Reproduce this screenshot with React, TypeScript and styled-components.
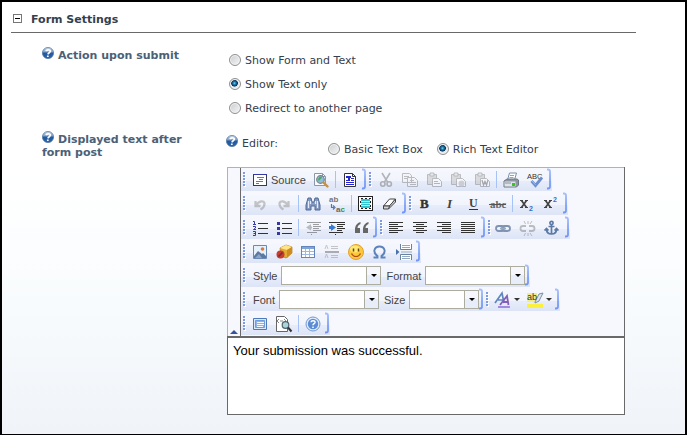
import React, { useState } from "react";
import type { ReactNode } from "react";
import styled, { createGlobalStyle, css } from "styled-components";

const ink = "#34404d";
const slate = "#4b6177";

const GlobalStyle = createGlobalStyle`
  *, *::before, *::after { box-sizing: border-box; }
  body { margin: 0; background: #fff; }
  button, select, textarea, input { font: inherit; margin: 0; }
`;

const Page = styled.main`
  min-height: 100vh;
  padding: 11px 49px 19px 9px;
  border: 2px solid #000;
  background: linear-gradient(#fff 0, #fff 40%, #fbfdfe 60%, #f5f9fc 80%, #f0f4f9 100%);
  color: ${ink};
  font: 11px/14px Verdana, "DejaVu Sans", sans-serif;
`;

const SectionHeader = styled.header`
  display: flex;
  align-items: flex-start;
  gap: 9px;
  padding: 0 0 5px 2px;
  border-bottom: 1px solid #696969;
`;

const Toggle = styled.button`
  display: flex;
  width: 9px;
  height: 9px;
  margin-top: 1px;
  padding: 0;
  border: 0;
  background: none;
`;

const Title = styled.h2`
  margin: 0;
  font-size: 11px;
  line-height: 14px;
`;

const Fields = styled.div`
  display: grid;
  grid-template-columns: 184px minmax(0, 1fr);
  padding: 14px 11px 0 31px;
`;

const FieldLabel = styled.div`
  padding-right: 24px;
  color: ${slate};
  font-weight: bold;
  line-height: 13px;
`;

const HelpIcon = styled.svg`
  width: 12px;
  height: 12px;
  margin-right: 4px;
`;

const RadioList = styled.div`
  display: flex;
  flex-direction: column;
  padding: 2px 0 10px 3px;
`;

const RadioLabel = styled.label`
  display: flex;
  align-items: center;
  gap: 4px;
  height: 24px;
  white-space: nowrap;
`;

const Radio = styled.input`
  appearance: none;
  flex: none;
  width: 12px;
  height: 12px;
  border: 1px solid #8e8f8f;
  border-radius: 50%;
  background: linear-gradient(135deg, #c9cccf, #f6f6f6);
  box-shadow: inset 0 0 0 1px #f4f4f4;
  &:checked {
    background: radial-gradient(circle at 45% 42%, #7fd6f5 0, #1e82b8 16%, #0c2f55 38%, #e4e9ed 46%);
  }
  && { margin-bottom: 2px; }
`;

const EditorField = styled.div`
  padding-top: 4px;
`;

const EditorChoice = styled.div`
  display: grid;
  grid-template-columns: 102px 1fr;
  height: 32px;
`;

const EditorModes = styled.div`
  display: flex;
  gap: 14px;
  padding-top: 3px;
`;

const Editor = styled.div`
  margin-left: 1px;
  border: 1px solid #696969;
  background: #fff;
`;

const ToolPanel = styled.div`
  display: flex;
  margin: -1px 0 0 -1px;
  border: 1px solid #b1b1b8;
  border-width: 1px 0 0 1px;
  background: #f7f8fd;
`;

const Collapser = styled.button`
  display: flex;
  align-items: flex-end;
  justify-content: center;
  flex: none;
  width: 13px;
  padding: 0 0 2px;
  border: 0;
  border-right: 1px solid #696969;
  background: #f7f8fd;
`;

const ToolRows = styled.div`
  flex: 1;
  min-width: 0;
`;

const ToolRow = styled.div`
  display: flex;
  height: 23px;
  margin-bottom: 1px;
`;

const Group = styled.div`
  display: flex;
  align-items: center;
  background: linear-gradient(#f7f8fe 0, #f1f4fc 55%, #e8edfa 55%, #dde4f6 100%);
`;

const Grip = styled.svg`
  width: 7px;
  height: 23px;
`;

const Bracket = styled.svg`
  width: 5px;
  height: 23px;
`;

const Divider = styled.span`
  width: 1px;
  height: 17px;
  margin: 0 2px;
  background: #a5c3f5;
`;

const ToolButton = styled.button<{ $muted?: boolean; $wide?: boolean }>`
  display: flex;
  align-items: center;
  justify-content: center;
  gap: 3px;
  width: ${(p) => (p.$wide ? "auto" : "24px")};
  height: 23px;
  padding: 0 ${(p) => (p.$wide ? 3 : 0)}px 0 ${(p) => (p.$wide ? 4 : 0)}px;
  border: 0;
  background: none;
  color: #444;
  font: 11px/14px "Liberation Sans", Arial, sans-serif;
  ${(p) => p.$muted && css`opacity: 0.45; filter: grayscale(1);`}
`;

const Glyph = styled.svg`
  flex: none;
  width: 16px;
  height: 16px;
  overflow: visible;
`;

const ComboLabel = styled.label`
  display: flex;
  align-items: center;
  gap: 4px;
  padding-left: 5px;
  color: #444;
  font: 11px/14px "Liberation Sans", Arial, sans-serif;
`;

const ComboBox = styled.span<{ $size: number }>`
  display: grid;
  width: ${(p) => p.$size}px;
  height: 19px;
  border: 1px solid #adad9f;
  background: #fff;
`;

const ComboSelect = styled.select`
  grid-area: 1 / 1;
  appearance: none;
  min-width: 0;
  padding: 0 16px 0 3px;
  border: 0;
  background: none;
`;

const ComboArrow = styled.span`
  grid-area: 1 / 1;
  justify-self: end;
  display: flex;
  align-items: center;
  justify-content: center;
  width: 14px;
  border-left: 1px solid #adad9f;
  background: linear-gradient(#f5f7fd 50%, #e8edfa 50%);
  pointer-events: none;
`;

const Content = styled.textarea`
  display: block;
  width: 100%;
  height: 78px;
  padding: 6px 5px;
  border: 0;
  border-top: 2px solid #696969;
  outline: 0;
  resize: none;
  background: #fff;
  color: #000;
  font: 13px/14px "Liberation Sans", Arial, sans-serif;
`;

function Help() {
  return (
    <HelpIcon viewBox="0 0 12 12" aria-hidden="true">
      <defs>
        <linearGradient id="helpBall" x1="0" y1="0" x2="0" y2="1">
          <stop offset="0" stopColor="#c9d5e3" />
          <stop offset="0.4" stopColor="#86a3c6" />
          <stop offset="0.5" stopColor="#2158a0" />
          <stop offset="1" stopColor="#2b64ab" />
        </linearGradient>
      </defs>
      <circle cx="6" cy="6" r="5.6" fill="url(#helpBall)" stroke="#4b719f" strokeWidth=".7" />
      <path d="M4 4.2C4.3 2.4 8.4 2.2 8.3 4.3C8.2 5.8 6.2 5.6 6 7.3M5.8 8.6v1.5" fill="none" stroke="#fff" strokeWidth="1.7" />
    </HelpIcon>
  );
}

const textLines = (d: string, color = "#333") => <path d={d} stroke={color} shapeRendering="crispEdges" />;

const clipboard = (
  <>
    <path d="M1.5 2.5h9v10h-9z" fill="#bbb" stroke="#777" />
    <path d="M4 1h4v3H4z" fill="#ddd" stroke="#777" />
    <path d="M6.5 6.5h6l3 3v5h-9z" fill="#fff" stroke="#777" />
  </>
);

const glyphs: Record<string, ReactNode> = {
  source: (
    <g shapeRendering="crispEdges">
      <path d="M1.5 2.5h13v11h-13z" fill="#fff" stroke="#3b3b46" />
      <path d="M1 2.5h14" stroke="#3538a5" />
      <path d="M5 5.5h7M7 7.5h4M4 9.5h7M4 11.5h3" stroke="#777" />
    </g>
  ),
  preview: (
    <>
      <path d="M1.5 1.5h8l3 3v9h-11z" fill="#f8fafd" stroke="#8b98ad" />
      <path d="M9.5 1.5v3h3" fill="none" stroke="#8b98ad" />
      <circle cx="7.5" cy="7.5" r="3.8" fill="#8dbedf" stroke="#77818c" strokeWidth="1.2" />
      <path d="M5 7c1-2 2-3 4-2 0 2-3 2-3 5z" fill="#51a667" />
      <path d="m10.5 10.5 4 4" stroke="#c39246" strokeWidth="2.4" strokeLinecap="round" />
    </>
  ),
  templates: (
    <>
      <path d="M2.5 1.5h8l3 3v10h-11z" fill="#fff" stroke="#333" />
      <path d="M10.5 1.5v3h3" fill="none" stroke="#333" />
      <path d="M4 4.5h5M6.5 4v4" stroke="#2525cf" strokeWidth="2" shapeRendering="crispEdges" />
      <path d="M4 10.5h8M4 12.5h8M9 6.5h3M9 8.5h3M4 8.5h4" stroke="#2525cf" shapeRendering="crispEdges" />
    </>
  ),
  cut: (
    <g fill="none" stroke="#666" strokeWidth="1.6">
      <path d="M4 1l5.5 9M12 1 6.5 10" />
      <circle cx="4.8" cy="12" r="2.2" />
      <circle cx="11.2" cy="12" r="2.2" />
    </g>
  ),
  copy: (
    <g fill="#f4f4f4" stroke="#777">
      <path d="M.5 1.5h7l2 2v7h-9zM5.5 5.5h7l3 3v6h-10z" />
      <path d="M2 4.5h5M2 6.5h3M8 8.5h4M8 10.5h6M8 12.5h6" />
    </g>
  ),
  paste: <>{clipboard}<path d="M8 9.5h4M8 11.5h6" stroke="#777" /></>,
  pasteText: <>{clipboard}<circle cx="11.5" cy="11.5" r="3" fill="#aaa" /></>,
  pasteWord: <>{clipboard}<path d="m8 8 1.5 5L11 9.5l1.5 3.5L14 8" fill="none" stroke="#555" strokeWidth="1.3" /></>,
  print: (
    <>
      <path d="m4.5 8 2-7h7l-2 7z" fill="#fff" stroke="#7690b0" />
      <path d="M7 3.5h4M6.5 5.5h4" stroke="#8ab" />
      <path d="m1 9 3-2h10l1.5 1v5l-2 2H1z" fill="#8d96a2" stroke="#6d7885" />
      <path d="M1.500 9.500h11v5h-11z" fill="#dfe4ea" />
      <path d="M2 11h6" stroke="#8a929c" />
      <rect x="9" y="11" width="3" height="3" fill="#39c328" />
    </>
  ),
  spell: (
    <>
      <text x="0" y="6.5" fontSize="7.5" fontFamily="Liberation Sans" fill="#333">ABC</text>
      <path d="m4.5 9 4 4.5L15 5.5" fill="none" stroke="#6c8fd0" strokeWidth="2.8" />
      <path d="m5 9 3.5 3.8" stroke="#9cbbec" strokeWidth="1" />
    </>
  ),
  undo: <path d="M3.500 5v5h5M4.500 9c2-4 8-5 8-1.500 0 3-1 4.500-4 6" fill="none" stroke="#888" strokeWidth="2.300" />,
  redo: <path d="M12.500 5v5h-5M11.500 9c-2-4-8-5-8-1.500 0 3 1 4.500 4 6" fill="none" stroke="#888" strokeWidth="2.300" />,
  find: (
    <>
      <path d="M3 2h3l1 4h2l1-4h3l2 7v5h-5v-4H6v4H1V9z" fill="#8399c0" stroke="#4f6b98" />
      <path d="M3.5 5v7M12.5 5v7M5.5 5v3M10.5 5v3" stroke="#e4edfb" strokeWidth="1.2" />
    </>
  ),
  replace: (
    <>
      <text x="0" y="6" fontSize="8" fontWeight="bold" fontFamily="Liberation Sans" fill="#777">ab</text>
      <text x="7" y="16" fontSize="8" fontWeight="bold" fontFamily="Liberation Sans" fill="#666">a<tspan fill="#379347">c</tspan></text>
      <path d="M2.5 8v3.5H5M4 9.5l2 2-2 2" fill="none" stroke="#5476ae" strokeWidth="1.2" />
    </>
  ),
  selectAll: (
    <g shapeRendering="crispEdges">
      <path d="M.5.5h14v14H.5z" fill="#fff" stroke="#222" />
      <path d="M3 3h9v9H3z" fill="#31c4cf" />
      <path d="M3 5.5h9M3 7.5h9M3 9.5h9" stroke="#a9f1f2" />
      <path d="M2.5 2.5h10v10h-10z" fill="none" stroke="#222" strokeDasharray="2 2" />
    </g>
  ),
  eraser: (
    <>
      <path d="m1.500 10 6-7h6l-6 7z" fill="#fff" stroke="#444" strokeLinejoin="round" />
      <path d="M1.500 10v3h5l7-7V3l-6 7z" fill="#d6d6d6" stroke="#444" strokeLinejoin="round" />
      <path d="M7.500 10l-1 3" stroke="#444" />
    </>
  ),
  bold: <text x="2" y="12" fontSize="13" fontWeight="bold" fontFamily="Liberation Serif" fill="#333" stroke="#333" strokeWidth=".4">B</text>,
  italic: <text x="5" y="12" fontSize="13" fontStyle="italic" fontWeight="bold" fontFamily="Liberation Serif" fill="#444">I</text>,
  underline: (
    <>
      <text x="3" y="11" fontSize="12" fontWeight="bold" fontFamily="Liberation Serif" fill="#444">U</text>
      {textLines("M3 13.5h9")}
    </>
  ),
  strike: (
    <>
      <text x="0" y="12" fontSize="11" fontWeight="bold" fontFamily="Liberation Serif" fill="#666">abc</text>
      {textLines("M-1 8.5h17", "#555")}
    </>
  ),
  sub: (
    <>
      <path d="M1 4.5h3M6 4.5h3M1 11.5h3M6 11.5h3" stroke="#444" />
      <path d="m2.500 4.5 5 7M7.500 4.5l-5 7" stroke="#444" strokeWidth="1.700" />
      <text x="10" y="14.5" fontSize="7" fontWeight="bold" fontFamily="Liberation Sans" fill="#3d6dc5">2</text>
    </>
  ),
  sup: (
    <>
      <path d="M1 4.5h3M6 4.5h3M1 11.5h3M6 11.5h3" stroke="#444" />
      <path d="m2.500 4.5 5 7M7.500 4.5l-5 7" stroke="#444" strokeWidth="1.700" />
      <text x="10" y="6" fontSize="7" fontWeight="bold" fontFamily="Liberation Sans" fill="#3d6dc5">2</text>
    </>
  ),
  numbered: (
    <>
      {textLines("M6 3.5h10M6 8.5h10M6 13.5h10")}
      <path d="M1 1.5h1.5v3M1 4.5h3M1 6.5h2.5v1.5L1.5 9.5H4M1 11.5h2.5v4H1M1.5 13.5h2" fill="none" stroke="#3538a5" />
    </>
  ),
  bullets: (
    <>
      {textLines("M6 3.5h10M6 8.5h10M6 13.5h10")}
      <path d="M1 2h3v3H1zM1 7h3v3H1zM1 12h3v3H1z" fill="#3538a5" shapeRendering="crispEdges" />
    </>
  ),
  outdent: (
    <>
      {textLines("M2 2.5h14M8 4.5h6M8 6.5h8M8 8.5h6M8 10.5h8M2 12.5h10M6 14.5h1")}
      <path d="M6 4v2.500h1v2H6v2L1 7.500z" fill="#777" />
    </>
  ),
  indent: (
    <>
      {textLines("M0 2.5h16M8 4.5h8M8 6.5h6M8 8.5h8M8 10.5h5M0 12.5h14M6 14.5h1")}
      <path d="M2 4v2H0v3h2v2l5-3.500z" fill="#387bd2" />
    </>
  ),
  quote: (
    <g fill="#666">
      <path d="M7.500 2C4 3 2 6 2 9.500V13h5V8H4.500c0-2 1-3 3-4zM15.500 2C12 3 10 6 10 9.500V13h5V8h-2.500c0-2 1-3 3-4z" />
    </g>
  ),
  left: textLines("M0 2.5h14M0 4.5h9M0 6.5h14M0 8.5h9M0 10.500h14M0 12.5h9"),
  center: textLines("M0 2.5h14M3 4.5h8M0 6.5h14M3 8.5h8M0 10.500h14M3 12.5h8"),
  right: textLines("M0 2.5h14M5 4.5h9M0 6.5h14M5 8.5h9M0 10.500h14M5 12.5h9"),
  justify: textLines("M0 2.5h14M0 4.5h14M0 6.5h14M0 8.5h14M0 10.500h14M0 12.5h14"),
  link: (
    <g fill="none" stroke="#7f93b2" strokeWidth="1.800">
      <rect x="-1" y="6" width="8" height="5" rx="2.500" />
      <rect x="5" y="6" width="8" height="5" rx="2.500" />
      <path d="M3 8.500h6" stroke="#98aac4" />
    </g>
  ),
  unlink: (
    <g fill="none" stroke="#777" strokeWidth="1.800">
      <path d="M5 6H2a2.500 2.500 0 0 0 0 5h3M8 6h3a2.500 2.500 0 0 1 0 5H8" />
      <path d="M3 1l1.500 3M7 1v3M11 1l-2 3M3 16l1.500-3M7 16v-3M11 16l-2-3" strokeWidth="1" />
    </g>
  ),
  anchor: (
    <g fill="none" stroke="#5c7aa6" strokeWidth="1.700">
      <circle cx="6.500" cy="3" r="1.600" />
      <path d="M6.500 4.500V14M3.500 6.500h6M1.500 9c0 3 2 5 5 5s5-2 5-5M-.500 10.500l2-2 2 2M9.500 10.500l2-2 2 2" />
    </g>
  ),
  image: (
    <>
      <path d="M1.500 1.500h13v13h-13z" fill="#e5f1fb" stroke="#6989b9" />
      <path d="m2 12 4-5 4 3 1-1 3 3v2H2z" fill="#5e789f" />
      <path d="m3 14 4-4 3 4z" fill="#8ba6c6" />
      <circle cx="10.500" cy="5" r="1.800" fill="#e0783a" />
    </>
  ),
  flash: (
    <>
      <path d="m4 4 6-3 6 2v6l-6 5-5-2z" fill="#e3ad33" stroke="#b57c18" strokeWidth=".7" />
      <path d="m4 4 6-3 6 2-5 3z" fill="#ffe486" />
      <path d="m11 6 5-3v6l-5 5z" fill="#cf8b1e" />
      <circle cx="4.500" cy="10.500" r="4" fill="#c93b30" />
      <path d="m2.500 12.500 4-4" stroke="#783025" strokeWidth="1.600" />
    </>
  ),
  table: (
    <g shapeRendering="crispEdges">
      <path d="M1.500 2.500h13v11h-13z" fill="#fff" stroke="#6385bd" />
      <path d="M2 3h12v2H2z" fill="#82a5d8" />
      <path d="M2 7.500h12M2 10.500h12M5.500 5v8M9.500 5v8" stroke="#9fb9de" />
    </g>
  ),
  rule: (
    <>
      <path d="M1 8h14" stroke="#555" strokeWidth="2" />
      <path d="m1 5 1.500-4L4 5M1 14l1.500-4L4 14M7 2.500h7M7 4.500h7M7 11.500h7M7 13.500h7" fill="none" stroke="#888" />
    </>
  ),
  smiley: (
    <>
      <circle cx="8" cy="8" r="7.500" fill="#fcc93b" stroke="#e3a12e" />
      <ellipse cx="7" cy="5" rx="5" ry="3.500" fill="#ffe873" />
      <path d="M5.500 4.500v3M10.500 4.500v3" stroke="#664310" strokeWidth="1.500" />
      <path d="M3.500 9.500c2 4 7 4 9 0" fill="none" stroke="#b34b1d" strokeWidth="1.200" />
    </>
  ),
  omega: <path d="M1.500 13.500h4V12C0 8 2.500 2.500 7.500 2.500S15 8 9.500 12v1.500h4" fill="none" stroke="#5c81bb" strokeWidth="1.900" />,
  pageBreak: (
    <>
      <path d="M4.500 0v5.500h11V0M4.500 16v-5.500h11V16" fill="#fff" stroke="#68819f" />
      <path d="M6 1.500h8M6 3.500h8M6 12.500h8M6 14.500h8M5 8h11" stroke="#91a9c3" />
      <path d="m0 5 3.500 3L0 11z" fill="#496fae" />
    </>
  ),
  textColor: (
    <>
      <path d="M0 11 7 1l2 10M3 8h5" fill="none" stroke="#6186bd" strokeWidth="1.700" />
      <path d="m5 13 7-9 1.500 9M8 10h5" fill="none" stroke="#8360b8" strokeWidth="1.800" />
      <path d="M3 15h12" stroke="#9670da" strokeWidth="1.600" />
    </>
  ),
  highlight: (
    <>
      <path d="M0 1h10v9H0z" fill="#f1ee87" />
      <path d="m8 10 4-8 4-1-4 8-4 2z" fill="#dce4ec" stroke="#7c8fa5" />
      <text x="0" y="8" fontSize="9" fontFamily="Liberation Sans" fill="#333">ab</text>
      <path d="M0 12h16v4H0z" fill="#fbf13a" />
    </>
  ),
  maximize: (
    <>
      <path d="M1.500 2.500h13v11h-13z" fill="#d9e8fb" stroke="#4e79bb" />
      <path d="M3.500 4.500h9v7h-9z" fill="#8eb4ea" stroke="#6f9bd8" />
      <path d="M5 6.500h7M5 8.500h7M5 10.500h6" stroke="#f4f8ff" />
    </>
  ),
  blocks: (
    <>
      <path d="M.500.5h8l3 3v12h-11z" fill="#fff" stroke="#666" />
      <path d="m3 3-2 2 2 2M8 3l2 2-2 2M4 5h3" fill="none" stroke="#888" />
      <circle cx="9.500" cy="9" r="3.300" fill="#a9d7d9" stroke="#526071" strokeWidth="1.200" />
      <path d="m12 11.500 3.500 4" stroke="#333" strokeWidth="2" />
    </>
  ),
  about: (
    <>
      <circle cx="8" cy="8" r="7" fill="#e0ecfc" stroke="#7298d2" />
      <circle cx="8" cy="8" r="5.200" fill="#5b8cd6" />
      <path d="M6 6.300c.2-2.300 4.300-2 4 .1C9.700 7.800 8 7.700 8 9.300M8 10.500V12" fill="none" stroke="#fff" strokeWidth="1.500" />
    </>
  ),
};

function Tool({ icon, name, muted, text }: { icon: string; name: string; muted?: boolean; text?: string }) {
  return (
    <ToolButton type="button" title={name} aria-label={name} $muted={muted} $wide={!!text}>
      <Glyph viewBox="0 0 16 16" aria-hidden="true">{glyphs[icon]}</Glyph>
      {text}
    </ToolButton>
  );
}

function ColorTool({ icon, name }: { icon: string; name: string }) {
  return (
    <ToolButton type="button" title={name} aria-label={name} $wide>
      <Glyph viewBox="0 0 16 16" aria-hidden="true">{glyphs[icon]}</Glyph>
      <svg width="6" height="3" aria-hidden="true"><path d="M0 0h6L3 3z" fill="#333" /></svg>
    </ToolButton>
  );
}

function ToolGroup({ children }: { children: ReactNode }) {
  return (
    <Group role="group">
      <Grip aria-hidden="true" shapeRendering="crispEdges">
        <path d="M4 5v15" stroke="#fff" strokeWidth="2" strokeDasharray="2 1" />
        <path d="M3 4v15" stroke="#7d9ae2" strokeWidth="2" strokeDasharray="2 1" />
      </Grip>
      {children}
      <Bracket aria-hidden="true">
        <defs>
          <linearGradient id="bracketFade" gradientUnits="userSpaceOnUse" x1="0" y1="0" x2="0" y2="22">
            <stop offset="0" stopColor="#a9c4fa" />
            <stop offset="0.6" stopColor="#7c9ff7" />
            <stop offset="1" stopColor="#7095f5" />
          </linearGradient>
        </defs>
        <path d="M0 1.500h1q2 0 2 2v15q0 2-2 2H0" fill="none" stroke="url(#bracketFade)" strokeWidth="1.800" />
      </Bracket>
    </Group>
  );
}

function Combo({ label, size }: { label: string; size: number }) {
  return (
    <ComboLabel>
      {label}
      <ComboBox $size={size}>
        <ComboSelect><option value="" /></ComboSelect>
        <ComboArrow>
          <svg width="6" height="3" aria-hidden="true"><path d="M0 0h6L3 3z" fill="#000" /></svg>
        </ComboArrow>
      </ComboBox>
    </ComboLabel>
  );
}

function Choice({ group, value, current, onPick }: { group: string; value: string; current: string; onPick: (v: string) => void }) {
  return (
    <RadioLabel>
      <Radio type="radio" name={group} checked={current === value} onChange={() => onPick(value)} />
      {value}
    </RadioLabel>
  );
}

function Toolbar() {
  return (
    <ToolPanel role="toolbar" aria-label="Editor toolbar">
      <Collapser type="button" aria-label="Collapse toolbar">
        <svg width="8" height="4" aria-hidden="true"><path d="M0 4 4 0l4 4z" fill="#36539f" /></svg>
      </Collapser>
      <ToolRows>
        <ToolRow>
          <ToolGroup>
            <Tool icon="source" name="Source" text="Source" />
            <Tool icon="preview" name="Preview" />
            <Divider />
            <Tool icon="templates" name="Templates" />
          </ToolGroup>
          <ToolGroup>
            <Tool icon="cut" name="Cut" muted />
            <Tool icon="copy" name="Copy" muted />
            <Tool icon="paste" name="Paste" muted />
            <Tool icon="pasteText" name="Paste as plain text" muted />
            <Tool icon="pasteWord" name="Paste from Word" muted />
            <Divider />
            <Tool icon="print" name="Print" />
            <Tool icon="spell" name="Check spelling" />
          </ToolGroup>
        </ToolRow>
        <ToolRow>
          <ToolGroup>
            <Tool icon="undo" name="Undo" muted />
            <Tool icon="redo" name="Redo" muted />
            <Divider />
            <Tool icon="find" name="Find" />
            <Tool icon="replace" name="Replace" />
            <Divider />
            <Tool icon="selectAll" name="Select all" />
            <Tool icon="eraser" name="Remove format" />
          </ToolGroup>
          <ToolGroup>
            <Tool icon="bold" name="Bold" />
            <Tool icon="italic" name="Italic" />
            <Tool icon="underline" name="Underline" />
            <Tool icon="strike" name="Strike through" />
            <Divider />
            <Tool icon="sub" name="Subscript" />
            <Tool icon="sup" name="Superscript" />
          </ToolGroup>
        </ToolRow>
        <ToolRow>
          <ToolGroup>
            <Tool icon="numbered" name="Numbered list" />
            <Tool icon="bullets" name="Bulleted list" />
            <Divider />
            <Tool icon="outdent" name="Decrease indent" muted />
            <Tool icon="indent" name="Increase indent" />
            <Tool icon="quote" name="Block quote" />
          </ToolGroup>
          <ToolGroup>
            <Tool icon="left" name="Align left" />
            <Tool icon="center" name="Center" />
            <Tool icon="right" name="Align right" />
            <Tool icon="justify" name="Justify" />
          </ToolGroup>
          <ToolGroup>
            <Tool icon="link" name="Link" />
            <Tool icon="unlink" name="Unlink" muted />
            <Tool icon="anchor" name="Anchor" />
          </ToolGroup>
        </ToolRow>
        <ToolRow>
          <ToolGroup>
            <Tool icon="image" name="Image" />
            <Tool icon="flash" name="Flash" />
            <Tool icon="table" name="Table" />
            <Tool icon="rule" name="Horizontal line" muted />
            <Tool icon="smiley" name="Smiley" />
            <Tool icon="omega" name="Special character" />
            <Tool icon="pageBreak" name="Page break" />
          </ToolGroup>
        </ToolRow>
        <ToolRow>
          <ToolGroup>
            <Combo label="Style" size={100} />
            <Combo label="Format" size={100} />
          </ToolGroup>
        </ToolRow>
        <ToolRow>
          <ToolGroup>
            <Combo label="Font" size={100} />
            <Combo label="Size" size={70} />
          </ToolGroup>
          <ToolGroup>
            <ColorTool icon="textColor" name="Text color" />
            <ColorTool icon="highlight" name="Background color" />
          </ToolGroup>
        </ToolRow>
        <ToolRow>
          <ToolGroup>
            <Tool icon="maximize" name="Maximize" />
            <Tool icon="blocks" name="Show blocks" />
            <Divider />
            <Tool icon="about" name="About" />
          </ToolGroup>
        </ToolRow>
      </ToolRows>
    </ToolPanel>
  );
}

export default function App() {
  const [action, setAction] = useState("Show Text only");
  const [mode, setMode] = useState("Rich Text Editor");
  const [open, setOpen] = useState(true);

  return (
    <>
      <GlobalStyle />
      <Page>
        <SectionHeader>
          <Toggle type="button" aria-label="Toggle section" aria-expanded={open} onClick={() => setOpen(!open)}>
            <svg width="9" height="9" shapeRendering="crispEdges" aria-hidden="true">
              <path d="M.5.5h8v8h-8z" fill="#fff" stroke="#777" />
              <path d="M2 4.500h5" stroke="#000" />
            </svg>
          </Toggle>
          <Title>Form Settings</Title>
        </SectionHeader>
        {open && (
          <Fields>
            <FieldLabel id="action-label"><Help />Action upon submit</FieldLabel>
            <RadioList role="radiogroup" aria-labelledby="action-label">
              {["Show Form and Text", "Show Text only", "Redirect to another page"].map((v) => (
                <Choice key={v} group="action" value={v} current={action} onPick={setAction} />
              ))}
            </RadioList>
            <FieldLabel id="text-label"><Help />Displayed text after form post</FieldLabel>
            <EditorField>
              <EditorChoice role="radiogroup" aria-labelledby="editor-label">
                <span id="editor-label"><Help />Editor:</span>
                <EditorModes>
                  <Choice group="mode" value="Basic Text Box" current={mode} onPick={setMode} />
                  <Choice group="mode" value="Rich Text Editor" current={mode} onPick={setMode} />
                </EditorModes>
              </EditorChoice>
              <Editor>
                <Toolbar />
                <Content aria-labelledby="text-label" defaultValue="Your submission was successful." />
              </Editor>
            </EditorField>
          </Fields>
        )}
      </Page>
    </>
  );
}
